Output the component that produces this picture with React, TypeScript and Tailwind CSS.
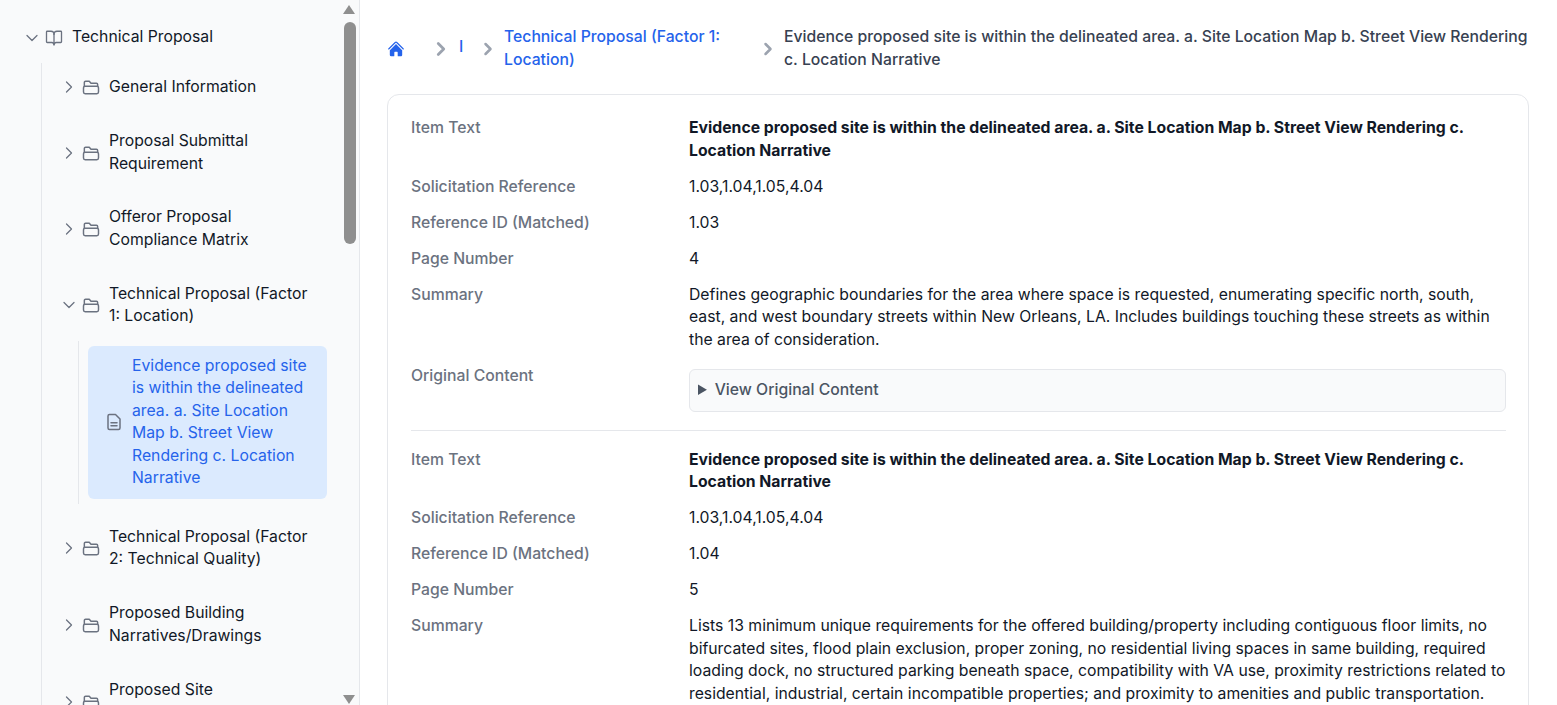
import React from "react";
import { ChevronRight, ChevronDown, BookOpen } from "lucide-react";
import { HiHome } from "react-icons/hi2";

function FolderIcon() {
  return (
    <svg viewBox="0 0 24 24" fill="none" stroke="currentColor" strokeWidth="1.75" strokeLinecap="round" strokeLinejoin="round" className="w-5 h-5 shrink-0 text-[#6b7280]">
      <path d="M4 11V6.5A1.5 1.5 0 0 1 5.5 5h4.4l2.1 2.5h6.5A1.5 1.5 0 0 1 20 9v2" />
      <rect x="3" y="11" width="18" height="9" rx="2" />
    </svg>
  );
}

function DocIcon() {
  return (
    <svg viewBox="0 0 24 24" fill="none" stroke="currentColor" strokeWidth="2" strokeLinecap="round" strokeLinejoin="round" className="w-[18px] h-[18px] shrink-0 text-[#6b7280]">
      <path d="M6 2a2 2 0 0 0-2 2v16a2 2 0 0 0 2 2h12a2 2 0 0 0 2-2V8l-6-6z" />
      <path d="M8 13h8M8 17h8" />
    </svg>
  );
}

function TreeRow({ label, open, mb = "mb-[15.25px]" }: { label: string; open?: boolean; mb?: string }) {
  return (
    <div className={`flex items-center py-2 pl-[17px] pr-2 ${mb}`}>
      {open ? <ChevronDown className="w-5 h-5 shrink-0 text-[#6b7280]" strokeWidth={1.5} /> : <ChevronRight className="w-5 h-5 shrink-0 text-[#6b7280]" strokeWidth={1.5} />}
      <span className="ml-[2px]"><FolderIcon /></span>
      <span className="ml-[8px] text-[#111827] leading-[22.5px] w-[210px]">{label}</span>
    </div>
  );
}

function Field({ label, children }: { label: string; children: React.ReactNode }) {
  return (
    <div className="grid grid-cols-[278px_1fr]">
      <div className="text-[#6b7280] font-medium">{label}</div>
      <div className="text-[#111827]">{children}</div>
    </div>
  );
}

function Entry({ refId, page, summary, last }: { refId: string; page: string; summary: string; last?: boolean }) {
  return (
    <div className={`flex flex-col gap-y-[13.5px] ${last ? "" : "pb-[18px] mb-[17.5px] border-b border-[#e5e7eb]"}`}>
      <Field label="Item Text">
        <span className="font-bold">Evidence proposed site is within the delineated area. a. Site Location Map b. Street View Rendering c. Location Narrative</span>
      </Field>
      <Field label="Solicitation Reference">1.03,1.04,1.05,4.04</Field>
      <Field label="Reference ID (Matched)">{refId}</Field>
      <Field label="Page Number">{page}</Field>
      <Field label="Summary">{summary}</Field>
      <Field label="Original Content">
        <details className="mt-[4px] border border-[#e5e7eb] rounded-md bg-[#f9fafb] px-[8px] py-[9.5px]">
          <summary className="text-[#4b5563] font-medium cursor-pointer">View Original Content</summary>
        </details>
      </Field>
    </div>
  );
}

export default function App() {
  return (
    <div className="flex h-screen overflow-hidden bg-white text-[15.75px] leading-[22.5px]" style={{ fontFamily: "Inter, sans-serif" }}>
      <aside className="relative w-[360px] shrink-0 h-full overflow-hidden bg-[#f9fafb] border-r border-[#e5e7eb]">
        <div className="pt-[26px] pl-[22px]">
          <div className="flex items-center h-[23px] mb-[14px]">
            <ChevronDown className="w-5 h-5 shrink-0 text-[#6b7280]" strokeWidth={1.5} />
            <BookOpen className="w-[18px] h-[18px] shrink-0 text-[#6b7280] ml-[3px]" strokeWidth={1.75} />
            <span className="ml-[9px] text-[#111827]">Technical Proposal</span>
          </div>
          <div className="ml-[19px] border-l border-[#e5e7eb] pt-[5px]">
            <TreeRow label="General Information" mb="mb-[15.5px]" />
            <TreeRow label="Proposal Submittal Requirement" />
            <TreeRow label="Offeror Proposal Compliance Matrix" mb="mb-[15.5px]" />
            <TreeRow open label="Technical Proposal (Factor 1: Location)" mb="mb-[5px]" />
            <div className="ml-[36px] border-l border-[#e5e7eb] py-[5px] pl-[9px] mb-[14px] w-[250px]">
              <div className="flex items-center bg-[#dbeafe] rounded-md py-[9px] pl-[17px] pr-[16px] text-[#2563eb] w-[239px]">
                <DocIcon />
                <span className="ml-[9px]">Evidence proposed site is within the delineated area. a. Site Location Map b. Street View Rendering c. Location Narrative</span>
              </div>
            </div>
            <TreeRow label="Technical Proposal (Factor 2: Technical Quality)" />
            <TreeRow label="Proposed Building Narratives/Drawings" mb="mb-[16px]" />
            <TreeRow label="Proposed Site Plans/Drawings" />
          </div>
        </div>
        <div className="absolute right-0 top-0 bottom-0 w-[17px] bg-[#f9fafb]">
          <div className="absolute left-[1px] top-[5px] w-0 h-0 border-x-[6.5px] border-x-transparent border-b-[9px] border-b-[#8f8f8f]" />
          <div className="absolute left-[2px] top-[22px] w-[11.5px] h-[222px] rounded-full bg-[#8f8f8f]" />
          <div className="absolute left-[1px] bottom-[1px] w-0 h-0 border-x-[6.5px] border-x-transparent border-t-[9px] border-t-[#8f8f8f]" />
        </div>
      </aside>
      <main className="flex-1 min-w-0 overflow-hidden pl-[27px] pr-[28px] pt-[26px]">
        <nav className="flex items-center h-[45px] mb-[23px] font-medium">
          <HiHome className="w-[18px] h-[18px] text-[#2563eb] shrink-0" />
          <ChevronRight className="w-[22px] h-[22px] text-[#9ca3af] shrink-0 ml-[25px]" strokeWidth={3} />
          <span className="text-[#2563eb] ml-[7px] w-[4px] relative -top-[1px]">I</span>
          <ChevronRight className="w-5 h-5 text-[#9ca3af] shrink-0 ml-[15px]" strokeWidth={3} />
          <span className="text-[#2563eb] ml-[6px] w-[232px] shrink-0">Technical Proposal (Factor 1: Location)</span>
          <ChevronRight className="w-5 h-5 text-[#9ca3af] shrink-0 ml-[22px]" strokeWidth={3} />
          <span className="text-[#374151] ml-[6px]">Evidence proposed site is within the delineated area. a. Site Location Map b. Street View Rendering c. Location Narrative</span>
        </nav>
        <section className="border border-[#e5e7eb] rounded-xl pl-[23px] pr-[22px] pt-[22px] pb-6">
          <Entry refId="1.03" page="4" summary="Defines geographic boundaries for the area where space is requested, enumerating specific north, south, east, and west boundary streets within New Orleans, LA. Includes buildings touching these streets as within the area of consideration." />
          <Entry last refId="1.04" page="5" summary="Lists 13 minimum unique requirements for the offered building/property including contiguous floor limits, no bifurcated sites, flood plain exclusion, proper zoning, no residential living spaces in same building, required loading dock, no structured parking beneath space, compatibility with VA use, proximity restrictions related to residential, industrial, certain incompatible properties; and proximity to amenities and public transportation." />
        </section>
      </main>
    </div>
  );
}
